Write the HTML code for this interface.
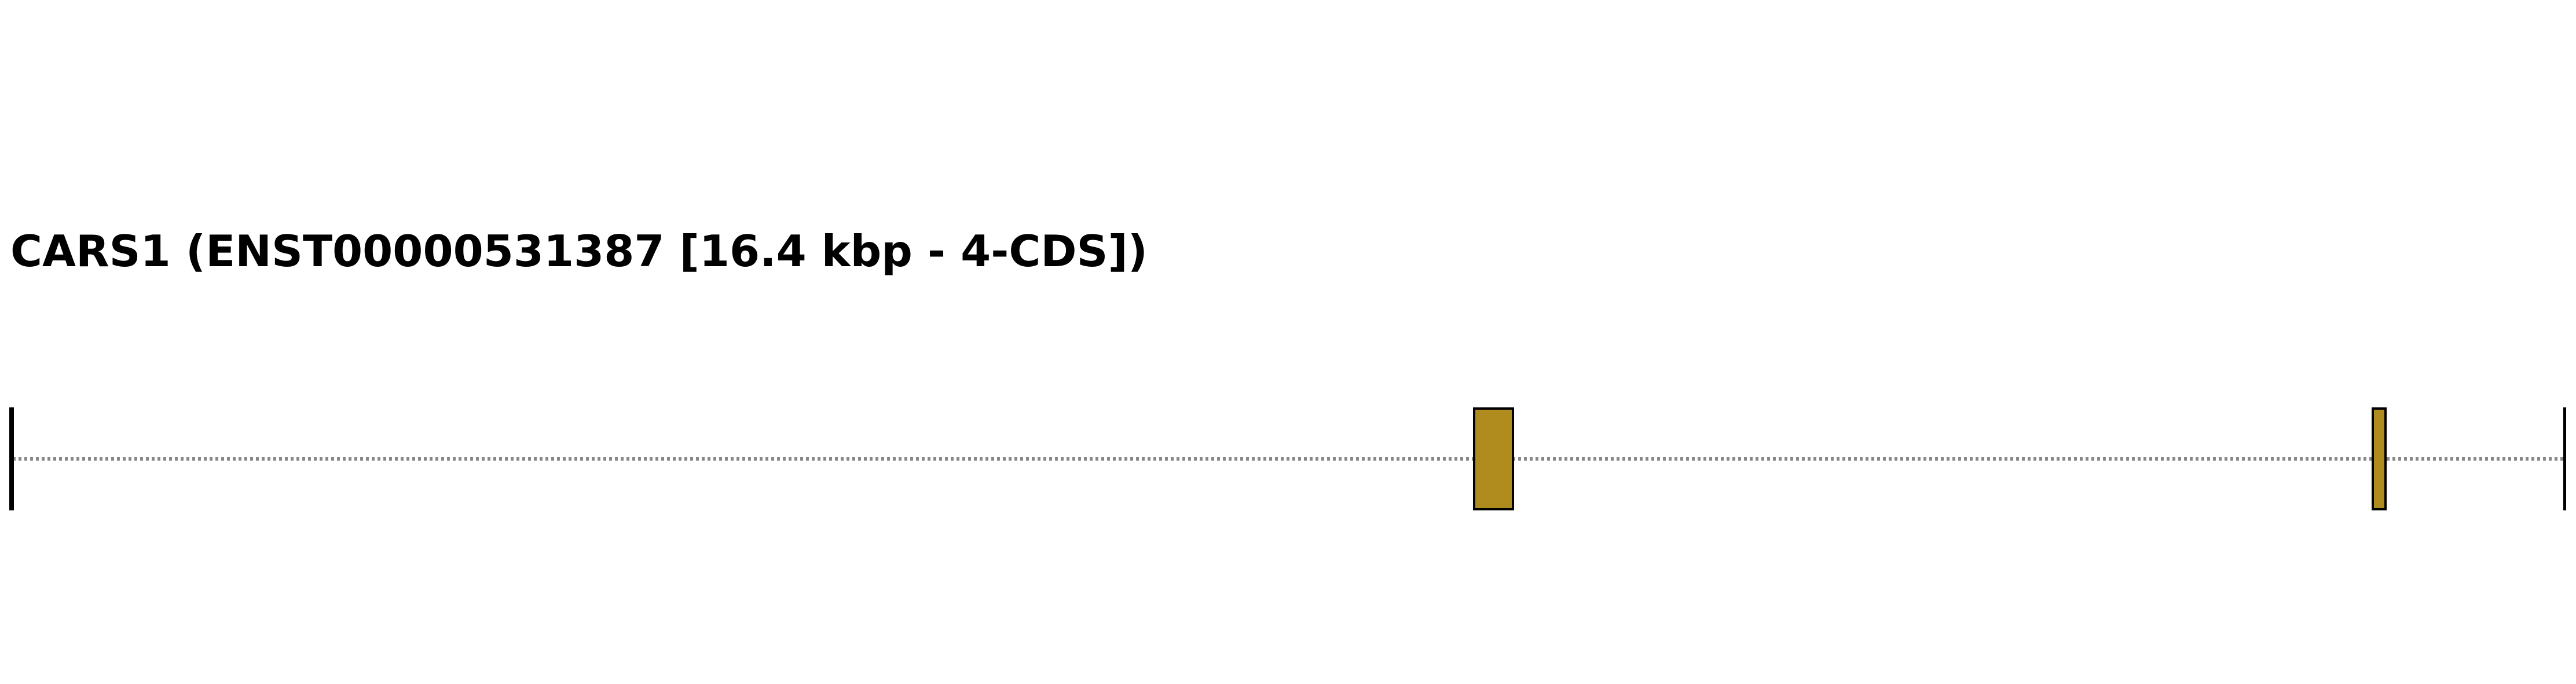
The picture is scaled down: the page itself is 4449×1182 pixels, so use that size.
<!DOCTYPE html>
<html><head><meta charset="utf-8"><style>
html,body{margin:0;padding:0;background:#fff;}
svg{display:block;}
</style></head><body>
<svg width="4449" height="1182" viewBox="0 0 4449 1182" xmlns="http://www.w3.org/2000/svg">
<rect width="4449" height="1182" fill="#fff"/>
<text x="18" y="460" font-family="DejaVu Sans, Liberation Sans, sans-serif" font-weight="bold" font-size="75" textLength="1964" lengthAdjust="spacingAndGlyphs">CARS1 (ENST00000531387 [16.4 kbp - 4-CDS])</text>
<line x1="22" y1="793" x2="4429" y2="793" stroke="#888" stroke-width="6" stroke-dasharray="5,5"/>
<rect x="18" y="706" width="4" height="174" fill="#b08c1e" stroke="#000" stroke-width="4"/>
<rect x="2546" y="706" width="67" height="174" fill="#b08c1e" stroke="#000" stroke-width="4"/>
<rect x="4098" y="706" width="22" height="174" fill="#b08c1e" stroke="#000" stroke-width="4"/>
<rect x="4427" y="704" width="5" height="178" fill="#000"/>
</svg>
</body></html>
